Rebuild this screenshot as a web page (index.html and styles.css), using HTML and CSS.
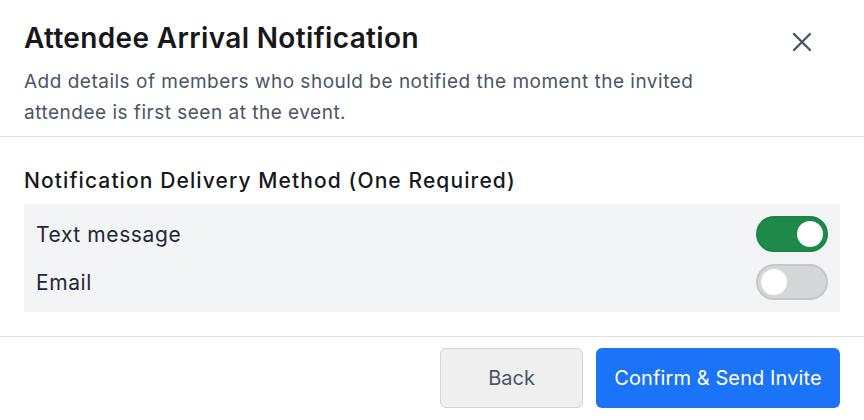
FILE: index.html
```html
<!DOCTYPE html>
<html lang="en">
<head>
<meta charset="utf-8">
<title>Attendee Arrival Notification</title>
<link rel="stylesheet" href="styles.css">
</head>
<body>
<div class="modal">
  <header class="modal-header">
    <div class="header-text">
      <h1 class="title">Attendee Arrival Notification</h1>
      <p class="subtitle">Add details of members who should be notified the moment the invited attendee is first seen at the event.</p>
    </div>
    <button class="close" aria-label="Close">
      <svg width="20" height="20" viewBox="0 0 20 20"><path d="M2 2L18 18M18 2L2 18" stroke="#4b5563" stroke-width="2.4" stroke-linecap="round" fill="none"/></svg>
    </button>
  </header>
  <section class="modal-body">
    <h2 class="section-title">Notification Delivery Method (One Required)</h2>
    <div class="options">
      <div class="option">
        <span class="option-label">Text message</span>
        <span class="toggle on"><span class="knob"></span></span>
      </div>
      <div class="option">
        <span class="option-label">Email</span>
        <span class="toggle"><span class="knob"></span></span>
      </div>
    </div>
  </section>
  <footer class="modal-footer">
    <button class="btn btn-back">Back</button>
    <button class="btn btn-primary">Confirm &amp; Send Invite</button>
  </footer>
</div>
</body>
</html>
```
FILE: styles.css
```css
* { box-sizing: border-box; }
html, body { margin: 0; padding: 0; background: #fff; }
body {
  font-family: Inter, "Noto Sans", sans-serif;
  color: #1f2937;
  width: 864px;
  height: 420px;
  overflow: hidden;
}
.modal { width: 864px; }
.modal-header {
  display: flex;
  justify-content: space-between;
  align-items: flex-start;
  padding: 20px 24px 8px 24px;
  border-bottom: 1px solid #e2e2e2;
}
.header-text { max-width: 700px; }
.title {
  margin: 0;
  font-size: 28px;
  line-height: 36px;
  font-weight: 600;
  color: #18181b;
  letter-spacing: 0.35px;
}
.subtitle {
  margin: 10px 0 0 0;
  font-size: 19px;
  line-height: 31px;
  color: #4b5563;
  letter-spacing: 0.5px;
}
.close {
  border: none;
  background: transparent;
  padding: 0;
  margin: 12px 28px 0 0;
  width: 20px;
  height: 20px;
  display: flex;
  cursor: pointer;
}
.modal-body {
  padding: 30px 24px 24px 24px;
  border-bottom: 1px solid #e2e2e2;
}
.section-title {
  margin: 0;
  font-size: 21px;
  line-height: 28px;
  font-weight: 500;
  color: #18181b;
  letter-spacing: 1.1px;
}
.options {
  margin-top: 9px;
  background: #f3f4f6;
  padding: 12px;
  display: flex;
  flex-direction: column;
  gap: 12px;
}
.option {
  display: flex;
  align-items: center;
  justify-content: space-between;
  height: 36px;
}
.option-label {
  font-size: 21px;
  color: #1f2937;
  letter-spacing: 0.6px;
}
.toggle {
  width: 72px;
  height: 36px;
  border-radius: 18px;
  background: #d6d7d9;
  border: 2px solid #c6c6c8;
  display: flex;
  align-items: center;
  padding: 0 3px;
}
.toggle.on {
  background: #1e8a4a;
  border-color: #1b8446;
  justify-content: flex-end;
}
.knob {
  width: 26px;
  height: 26px;
  border-radius: 50%;
  background: #fff;
}
.modal-footer {
  display: flex;
  justify-content: flex-end;
  gap: 13px;
  padding: 11px 24px 0 24px;
}
.btn {
  height: 60px;
  font-family: inherit;
  font-size: 20px;
  border-radius: 6px;
  cursor: pointer;
}
.btn-back {
  width: 143px;
  background: #efefef;
  border: 1.5px solid #d3d3d3;
  color: #4b5563;
}
.btn-primary {
  width: 244px;
  background: #1b74f8;
  border: none;
  color: #fff;
  letter-spacing: 0.1px;
}
```
